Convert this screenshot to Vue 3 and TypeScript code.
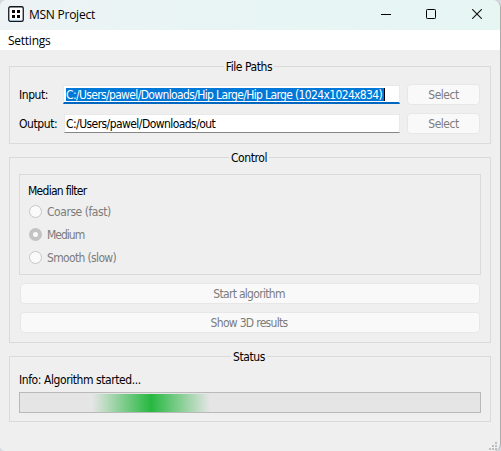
<script setup lang="ts">
import { ref } from 'vue'

const paths = ref([
  { label: 'Input:', value: 'C:/Users/pawel/Downloads/Hip Large/Hip Large (1024x1024x834)', focused: true },
  { label: 'Output:', value: 'C:/Users/pawel/Downloads/out', focused: false },
])
const filters = ['Coarse (fast)', 'Medium', 'Smooth (slow)']
const selected = ref('Medium')
const actions = ['Start algorithm', 'Show 3D results']
</script>

<template>
  <div class="window">
    <header class="titlebar">
      <svg class="logo" width="16" height="16" viewBox="0 0 16 16">
        <rect x=".75" y=".75" width="14.5" height="14.5" rx="1.6" fill="#fff" stroke="#10161d" stroke-width="1.3" />
        <path d="M2 14.2h12" stroke="#a9d0f5" />
        <path d="M4 4h3v3H4zM9 4h3v3H9zM4 9h3v3H4zM9 9h3v3H9z" fill="#000" />
      </svg>
      <span class="title">MSN Project</span>
      <div class="controls">
        <svg width="10" height="10" viewBox="0 0 10 10"><path d="M0 5.5h10" stroke="#000" /></svg>
        <svg width="10" height="10" viewBox="0 0 10 10"><rect x=".5" y=".5" width="9" height="9" rx=".8" fill="none" stroke="#000" /></svg>
        <svg class="close" width="10" height="10" viewBox="0 0 10 10"><path d="M.2.2l9.6 9.6M9.8.2L.2 9.8" stroke="#111" stroke-width="1.1" /></svg>
      </div>
    </header>
    <nav class="menubar"><span>Settings</span></nav>
    <main class="content">
      <section class="group files">
        <h2><span>File Paths</span></h2>
        <div v-for="p in paths" :key="p.label" class="row">
          <label>{{ p.label }}</label>
          <div class="field" :class="{ focused: p.focused }"><span>{{ p.value }}</span></div>
          <button class="btn" disabled><span>Select</span></button>
        </div>
      </section>
      <section class="group control">
        <h2><span>Control</span></h2>
        <div class="frame">
          <p>Median filter</p>
          <div v-for="f in filters" :key="f" class="option">
            <i class="radio" :class="{ on: f === selected }"></i><span>{{ f }}</span>
          </div>
        </div>
        <button v-for="a in actions" :key="a" class="btn wide" disabled><span>{{ a }}</span></button>
      </section>
      <section class="group status">
        <h2><span>Status</span></h2>
        <p class="info">Info: Algorithm started...</p>
        <div class="progress"><div class="chunk"></div></div>
      </section>
    </main>
    <svg class="grip" width="8" height="8" viewBox="0 0 8 8">
      <path d="M6 0h2v2H6zM3 3h2v2H3zM6 3h2v2H6zM0 6h2v2H0zM3 6h2v2H3zM6 6h2v2H6z" fill="#bfbfbf" />
    </svg>
  </div>
</template>

<style>
body {
  background: #d5d9df;
}
</style>

<style scoped>
.window {
  position: relative;
  box-sizing: border-box;
  width: 501px;
  height: 451px;
  overflow: hidden;
  border-right: 1px solid #ababab;
  border-radius: 7px 8px 7px 5px;
  background: #efefef;
  color: #000;
  font: 12px/14px "DejaVu Sans Condensed", "DejaVu Sans", sans-serif;
  font-stretch: condensed;
  letter-spacing: -0.42px;
}
.titlebar {
  display: flex;
  align-items: center;
  box-sizing: border-box;
  height: 30px;
  padding: 0 18px 2px 8px;
  background: linear-gradient(90deg, #eef3f5, #e8f5f4 45%, #e6f6f3);
}
.title {
  flex: 1;
  margin: 2px 0 0 5px;
  font: 12px/16px "Open Sans", sans-serif;
  letter-spacing: -0.25px;
}
.controls {
  display: flex;
  gap: 35px;
}
.close {
  margin-left: 1px;
}
.menubar {
  box-sizing: border-box;
  height: 20px;
  padding: 2px 8px;
  background: #fff;
  font: 12px/17px "Open Sans", sans-serif;
  letter-spacing: -0.25px;
}
.content {
  display: flex;
  flex-direction: column;
  gap: 13px;
  padding: 16px 9px 0;
}
.group {
  box-sizing: border-box;
  border: 1px solid #dadada;
  padding: 0 9px;
}
h2 {
  display: flex;
  justify-content: center;
  height: 14px;
  margin: -7px 0 0;
  font: inherit;
}
h2 span {
  margin-left: -2px;
  padding: 0 2px;
  background: #efefef;
}
.files {
  height: 78px;
}
.row {
  display: flex;
  align-items: flex-start;
  height: 21px;
  margin: 10px 0 -2px;
}
.row label {
  width: 45px;
  padding-top: 4px;
}
.field {
  box-sizing: border-box;
  width: 336px;
  height: 19px;
  margin-top: 1px;
  padding: 2px 1px 0;
  border: 1px solid #e9e9e9;
  border-bottom-color: #868686;
  background: #fff;
  line-height: 14px;
  white-space: nowrap;
}
.field.focused {
  width: 337px;
  margin-left: -1px;
  padding-left: 2px;
  border-bottom: 2px solid #0067c0;
  letter-spacing: -0.64px;
}
.field:not(.focused) {
  letter-spacing: -0.56px;
}
.focused span {
  display: block;
  width: 318px;
  height: 13px;
  border-right: 1px solid #000;
  background: #0078d7;
  color: #fff;
}
.btn {
  box-sizing: border-box;
  width: 73px;
  height: 21px;
  margin-left: 7px;
  padding: 0;
  border: 1px solid #e7e7e7;
  border-radius: 4px;
  background: #f9f9f9;
  color: #7c7c7c;
  font: inherit;
  letter-spacing: -0.5px;
}
.control {
  height: 186px;
}
.frame {
  box-sizing: border-box;
  height: 101px;
  margin-top: 9px;
  padding: 9px 9px 9px 8px;
  border: 1px solid #dadada;
}
p {
  margin: 0;
}
.option {
  display: flex;
  align-items: center;
  gap: 5px;
  height: 23px;
  padding-left: 1px;
  color: #7c7c7c;
  letter-spacing: -0.65px;
}
.option:nth-child(2) {
  letter-spacing: -0.45px;
}
.option:nth-child(3) {
  letter-spacing: -1px;
}
.frame p {
  margin-bottom: 2px;
  letter-spacing: -0.72px;
}
.radio {
  box-sizing: border-box;
  width: 13px;
  height: 13px;
  border: 1px solid #c6c6c6;
  border-radius: 50%;
  background: #fafafa;
}
.radio.on {
  border: 4px solid #c3c3c3;
}
.btn.wide {
  display: block;
  width: 460px;
  margin: 8px 0 0 1px;
  padding-right: 2px;
  letter-spacing: -0.7px;
}
.status {
  height: 66px;
}
.info {
  margin-top: 9px;
}
.progress {
  box-sizing: border-box;
  width: 462px;
  height: 21px;
  margin-top: 5px;
  padding: 1px 72px;
  border: 1px solid #b9b9b9;
  background: #e5e5e5;
}
.chunk {
  width: 118px;
  height: 18px;
  background: linear-gradient(90deg, #26b84000, #26b840 50%, #26b84000);
}
.grip {
  position: absolute;
  right: 3px;
  bottom: 1px;
}
</style>
